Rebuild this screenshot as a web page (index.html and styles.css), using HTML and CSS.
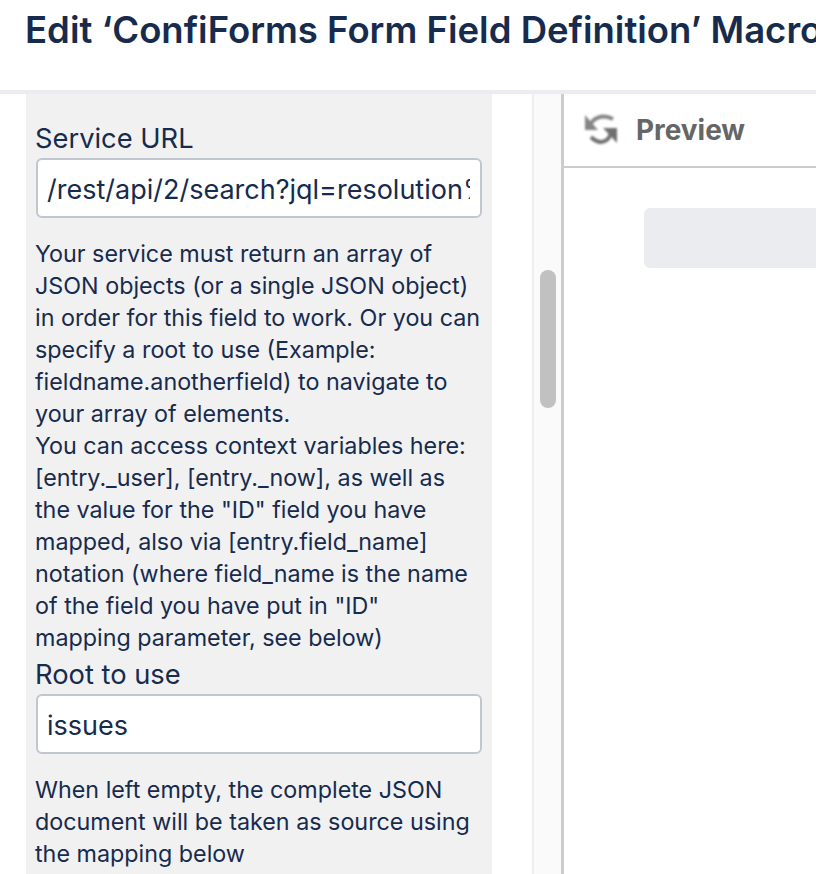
FILE: index.html
```html
<!DOCTYPE html>
<html lang="en">
<head>
    <meta charset="UTF-8">
    <meta name="viewport" content="width=device-width, initial-scale=1.0">
    <title>Edit Macro</title>
    <link rel="stylesheet" href="styles.css">
</head>
<body>
    <div class="dialog">
        <div id="header">
            <div id="heading">Edit ‘ConfiForms Form Field Definition’ Macro</div>
        </div>

        <div class="content">
            <div class="left-col">
                <div class="params">
                    <label class="field-label first" for="service-url">Service URL</label>
                    <input class="field-input" id="service-url" type="text" value="/rest/api/2/search?jql=resolution%20=%20unresolved">
                    <div class="field-desc">
                        Your service must return an array of<br>
                        JSON objects (or a single JSON object)<br>
                        in order for this field to work. Or you can<br>
                        specify a root to use (Example:<br>
                        fieldname.anotherfield) to navigate to<br>
                        your array of elements.<br>
                        You can access context variables here:<br>
                        [entry._user], [entry._now], as well as<br>
                        the value for the "ID" field you have<br>
                        mapped, also via [entry.field_name]<br>
                        notation (where field_name is the name<br>
                        of the field you have put in "ID"<br>
                        mapping parameter, see below)
                    </div>

                    <label class="field-label second" for="root-use">Root to use</label>
                    <input class="field-input" id="root-use" type="text" value="issues">
                    <div class="field-desc">
                        When left empty, the complete JSON<br>
                        document will be taken as source using<br>
                        the mapping below
                    </div>
                </div>
            </div>

            <div class="scroll-track">
                <div class="scroll-thumb"></div>
            </div>

            <div class="preview">
                <div class="preview-head">
                    <svg class="refresh-icon" viewBox="0 0 34 32" width="34" height="32" fill="none">
                        <path d="M5 13 C9 3 19 0 29 5" stroke="#858585" stroke-width="4"/>
                        <path d="M1 1 L1 16 L14 16 Z" fill="#858585"/>
                        <path d="M27 18 C25 29 15 31 7 23" stroke="#707070" stroke-width="4"/>
                        <path d="M33 29 L33 14 L19 14 Z" fill="#707070"/>
                    </svg>
                    <span class="preview-title">Preview</span>
                </div>
                <div class="preview-body">
                    <div class="preview-block"></div>
                </div>
            </div>
        </div>
    </div>
</body>
</html>
```

FILE: styles.css
```css
* {
    margin: 0;
    padding: 0;
    box-sizing: border-box;
}

html, body {
    height: 100%;
    overflow: hidden;
}

body {
    font-family: 'Inter', 'Liberation Sans', sans-serif;
    background-color: white;
    color: #172b4d;
}

.dialog {
    height: 874px;
    display: flex;
    flex-direction: column;
}

#header {
    height: 94px;
    flex-shrink: 0;
    padding: 8px 0 0 25px;
    border-bottom: 4px solid #ebecf0;
    overflow: hidden;
}

#heading {
    font-size: 36.5px;
    line-height: 44px;
    font-weight: 600;
    white-space: nowrap;
}

.content {
    flex: 1;
    display: flex;
    min-height: 0;
}

.left-col {
    width: 532px;
    flex-shrink: 0;
    padding-left: 26px;
    overflow: hidden;
}

.params {
    width: 466px;
    height: 100%;
    padding: 0 9px;
    background-color: #f1f1f2;
}

.field-label {
    display: block;
    font-size: 27.3px;
    line-height: 34px;
    margin-bottom: 2px;
}

.field-label.first {
    padding-top: 28px;
}

.field-label.second {
    margin-top: 4px;
}

.field-input {
    display: block;
    width: 446px;
    height: 60px;
    margin-left: 1px;
    padding: 2px 10px 0 9px;
    border: 2px solid #c1c7d0;
    border-radius: 6px;
    background-color: white;
    font-family: inherit;
    font-size: 27px;
    color: #172b4d;
}

.field-desc {
    margin-top: 20px;
    font-size: 23.3px;
    line-height: 32px;
    white-space: nowrap;
}

.scroll-track {
    width: 32px;
    flex-shrink: 0;
    padding: 176px 6px 0 6px;
    background-color: #fafafa;
    border-left: 2px solid #eeeeee;
    border-right: 3px solid #cccccc;
}

.scroll-thumb {
    width: 16px;
    height: 138px;
    border-radius: 8px;
    background-color: #c1c1c1;
}

.preview {
    flex: 1;
    min-width: 0;
}

.preview-head {
    height: 74px;
    padding-left: 20px;
    display: flex;
    align-items: center;
    gap: 18px;
    border-bottom: 2px solid #cccccc;
}

.refresh-icon {
    flex-shrink: 0;
    filter: blur(1px);
}

.preview-title {
    font-size: 27.9px;
    font-weight: 700;
    color: #666666;
}

.preview-body {
    padding: 40px 0 0 80px;
}

.preview-block {
    height: 60px;
    border-radius: 6px 0 0 6px;
    background-color: #ebecf0;
}
```
